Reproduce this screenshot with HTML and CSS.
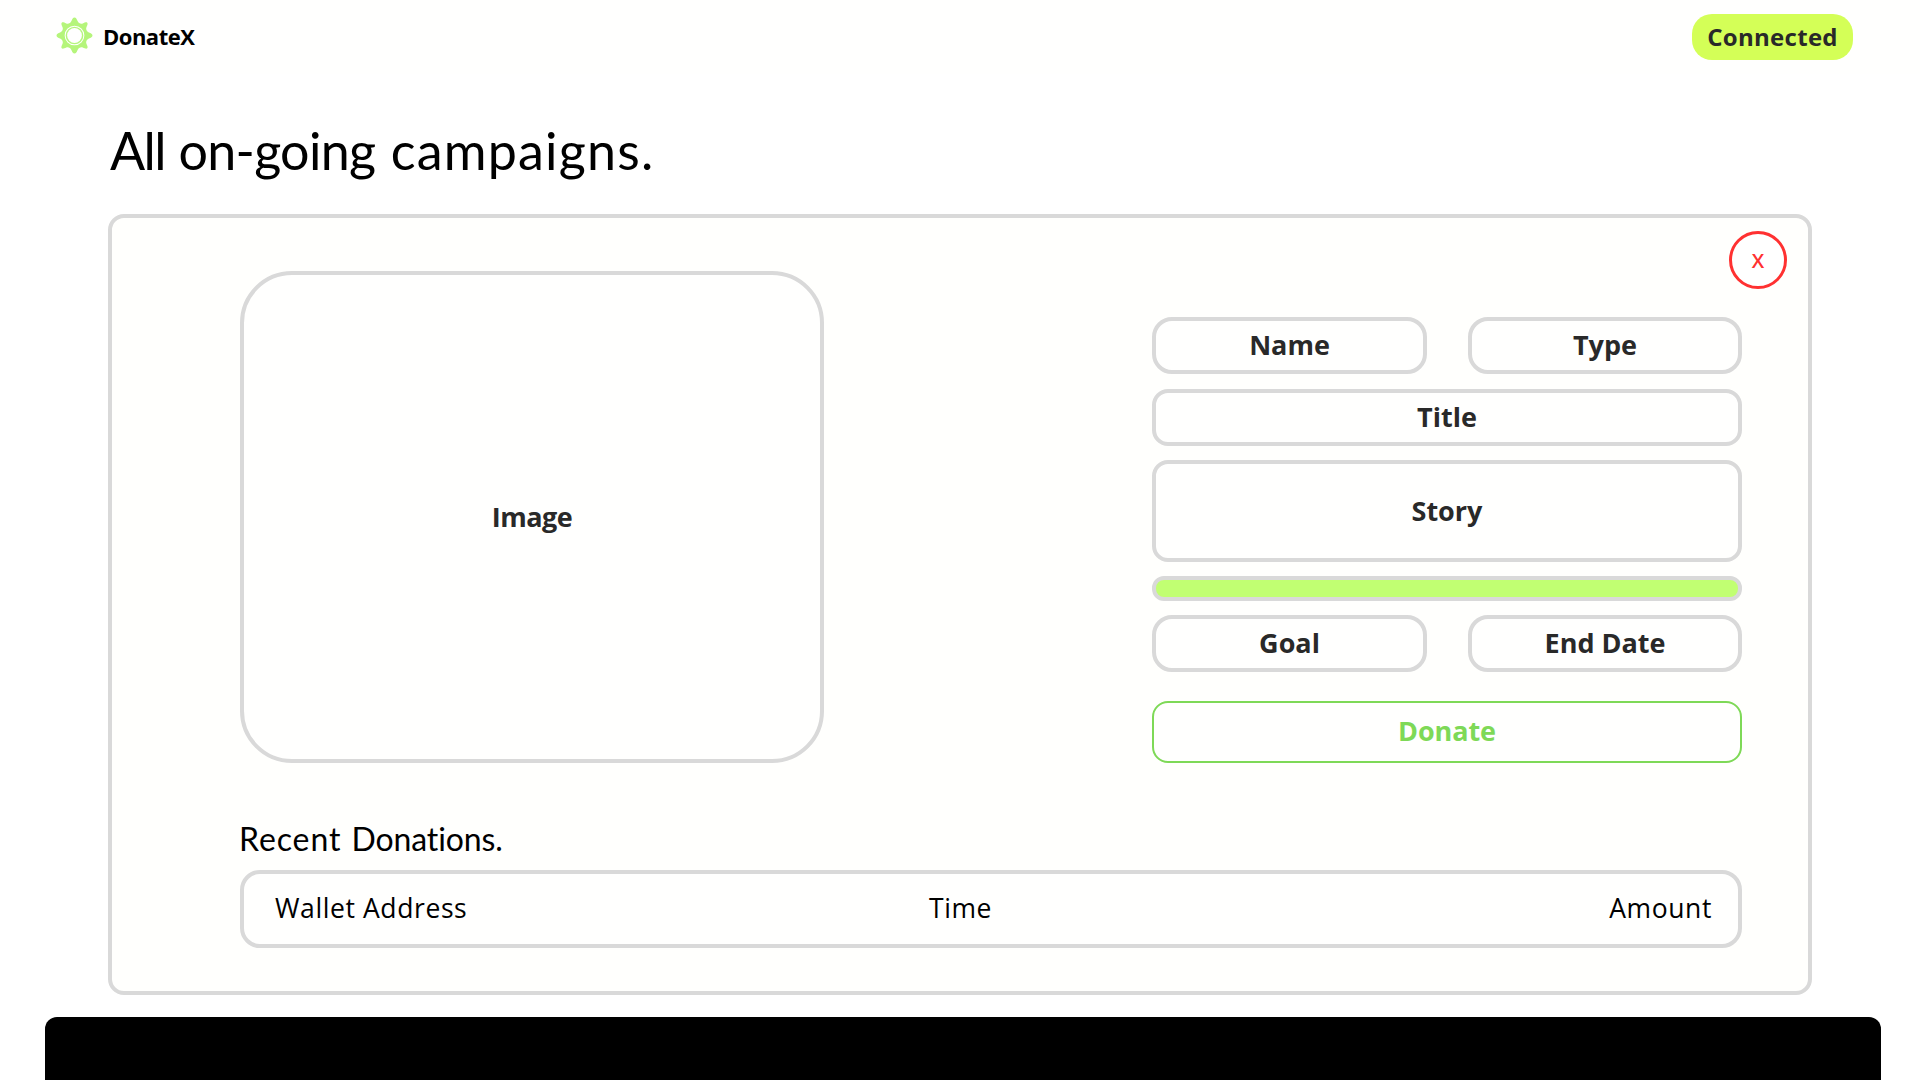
FILE: index.html
```
<!DOCTYPE html>
<html lang="en">
<head>
<meta charset="utf-8">
<title>DonateX</title>
<link rel="stylesheet" href="styles.css">
</head>
<body>
<header class="topbar">
  <div class="brand">
    <svg class="logo" viewBox="-18 -18 36 36" aria-hidden="true">
      <path class="gear" d="M0-17.500C1.500-17.500 2.200-16 3-14C4-11.800 6.200-10.800 8-11.600C10-12.600 11.600-13.200 12.400-12.400C13.200-11.600 12.600-10 11.600-8C10.800-6.200 11.800-4 14-3C16-2.200 17.500-1.500 17.500 0C17.500 1.500 16 2.200 14 3C11.800 4 10.800 6.200 11.600 8C12.600 10 13.200 11.600 12.400 12.400C11.600 13.200 10 12.600 8 11.600C6.200 10.800 4 11.800 3 14C2.200 16 1.500 17.500 0 17.500C-1.500 17.500-2.200 16-3 14C-4 11.800-6.200 10.800-8 11.600C-10 12.600-11.600 13.200-12.400 12.400C-13.200 11.600-12.600 10-11.600 8C-10.800 6.200-11.800 4-14 3C-16 2.200-17.500 1.500-17.500 0C-17.500-1.500-16-2.200-14-3C-11.800-4-10.800-6.200-11.600-8C-12.600-10-13.200-11.600-12.400-12.400C-11.600-13.200-10-12.600-8-11.600C-6.200-10.800-4-11.800-3-14C-2.200-16-1.500-17.500 0-17.500Z"/>
      <circle class="ring" r="9.100"/>
      <circle class="hub" r="7.200"/>
    </svg>
    <span class="brand-name">DonateX</span>
  </div>
  <button class="connected">Connected</button>
</header>
<main class="page">
  <h1 class="heading"><span class="tight">All</span> <span class="snug">on-going</span> <span class="wide">campaigns.</span></h1>
  <section class="card">
    <button class="close">X</button>
    <div class="campaign">
      <div class="box image">Image</div>
      <div class="details">
        <div class="pair"><div class="box field round">Name</div><div class="box field round">Type</div></div>
        <div class="box field">Title</div>
        <div class="box story">Story</div>
        <div class="box progress"></div>
        <div class="pair"><div class="box field round">Goal</div><div class="box field round">End Date</div></div>
        <button class="donate">Donate</button>
      </div>
    </div>
    <h2 class="subheading"><span class="open">Recent</span> Donations.</h2>
    <div class="donation"><span>Wallet Address</span><span>Time</span><span>Amount</span></div>
  </section>
</main>
<footer class="footer"></footer>
</body>
</html>
```
FILE: styles.css
```
* { box-sizing: border-box; }
body {
  margin: 0;
  height: 1080px;
  overflow: hidden;
  display: flex;
  flex-direction: column;
  background: #fff;
  color: #000;
  font-family: "Open Sans", "Noto Sans", sans-serif;
}
button { font-family: inherit; padding: 0; }
.topbar {
  height: 74px;
  flex: none;
  display: flex;
  justify-content: space-between;
  align-items: center;
  padding: 0 67px 0 56px;
  background: #fffffe;
}
.brand { display: flex; align-items: center; gap: 10px; }
.logo { width: 37px; height: 37px; margin-top: -3px; }
.gear { fill: #b5f57b; }
.ring { fill: #b5f57b; stroke: #fff; stroke-width: 1; }
.hub { fill: #fff; }
.brand-name {
  margin-top: -2px;
  font-size: 22px;
  font-weight: 700;
  letter-spacing: -.5px;
  line-height: 30px;
}
.connected {
  width: 161px;
  height: 46px;
  border: 0;
  border-radius: 20px;
  background: #d4ff57;
  color: #292929;
  font-size: 24px;
  font-weight: 700;
  letter-spacing: .3px;
  line-height: 46px;
}
.page { padding: 46px 108px 0; flex: none; }
.heading, .subheading {
  margin: 0;
  font-family: Lato, sans-serif;
  font-weight: 400;
  font-variant-ligatures: none;
}
.heading { font-size: 52px; line-height: 60px; padding-left: 2px; }
.tight { letter-spacing: -1.500px; }
.snug { letter-spacing: -.7px; margin-right: 2px; }
.wide { letter-spacing: 1.200px; }
.open { letter-spacing: .9px; margin-right: 2px; }
.card {
  position: relative;
  height: 781px;
  margin-top: 34px;
  padding: 53px 66px 0 128px;
  border: 4px solid #d9d9d9;
  border-radius: 16px;
  background: #fffffd;
}
.close {
  position: absolute;
  top: 13px;
  right: 21px;
  width: 58px;
  height: 58px;
  border: 3px solid #ff3131;
  border-radius: 50%;
  background: #fff;
  color: #ff3131;
  font-size: 20px;
  font-weight: 650;
}
.campaign { display: flex; justify-content: space-between; }
.box {
  display: flex;
  align-items: center;
  justify-content: center;
  padding-bottom: 2px;
  border: 4px solid #d9d9d9;
  border-radius: 16px;
  background: #fffffe;
  color: #292929;
  font-size: 27px;
  font-weight: 700;
  letter-spacing: 0;
}
.image { width: 584px; height: 492px; border-radius: 52px; letter-spacing: -.5px; }
.details { width: 590px; padding-top: 46px; display: flex; flex-direction: column; }
.pair { display: grid; grid-template-columns: 275px 274px; justify-content: space-between; }
.field { height: 57px; }
.round { border-radius: 20px; }
.details > .field { margin-top: 15px; }
.story { height: 102px; margin-top: 14px; }
.progress { height: 25px; margin: 14px 0; border-radius: 12px; background: #c1ff72; }
.donate {
  height: 62px;
  margin-top: 29px;
  padding-bottom: 3px;
  border: 2px solid #7ed957;
  border-radius: 16px;
  background: #fffffe;
  color: #7ed957;
  font-size: 27px;
  font-weight: 700;
  letter-spacing: -.1px;
}
.subheading { font-size: 32px; line-height: 40px; letter-spacing: -.1px; margin: 56px 0 11px -1px; }
.donation {
  height: 78px;
  display: grid;
  grid-template-columns: 654px 1fr auto;
  align-items: center;
  padding: 0 26px 2px 31px;
  border: 4px solid #d9d9d9;
  border-radius: 20px;
  background: #fffffe;
  font-size: 26.500px;
  letter-spacing: .6px;
}
.footer {
  flex: 1;
  margin: 22px 39px 0 45px;
  border-radius: 12px 12px 0 0;
  background: #000;
}
```
